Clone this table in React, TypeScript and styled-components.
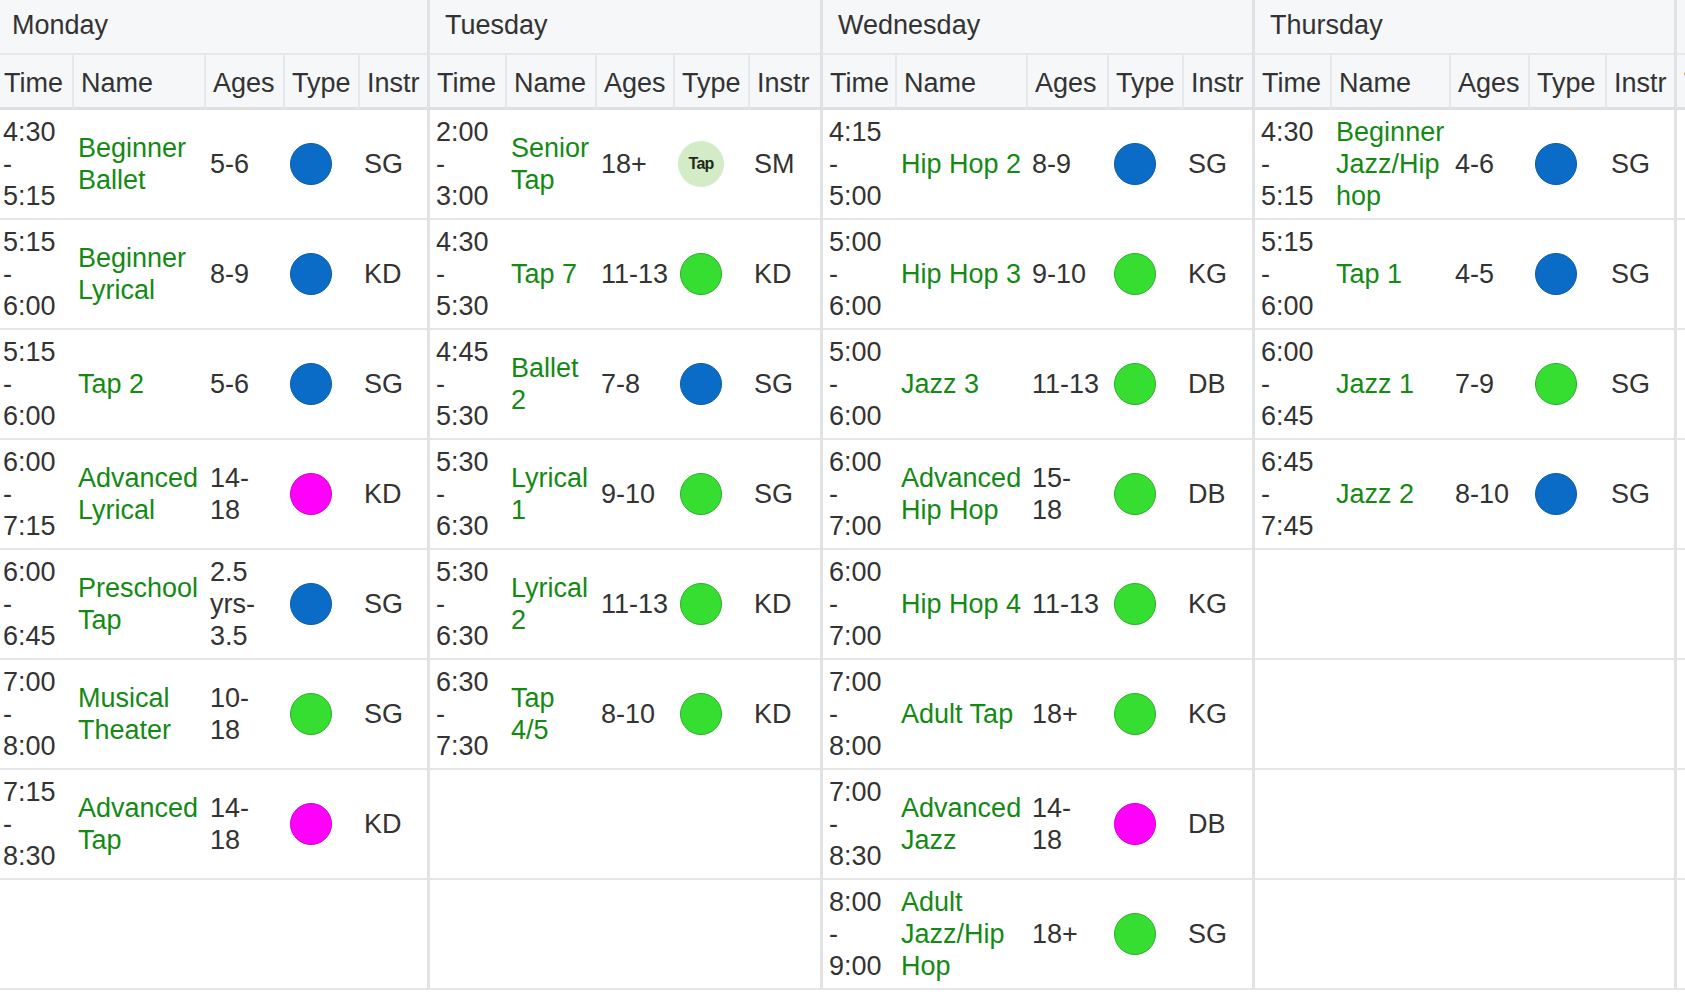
import React from 'react'
import styled, { createGlobalStyle } from 'styled-components'

const GlobalStyle = createGlobalStyle`
    html, body {
        margin: 0;
        padding: 0;
        background: #ffffff;
        overflow: hidden;
    }
    body {
        font-family: "Liberation Sans", Arial, Helvetica, sans-serif;
        color: #333333;
    }
`

type Kind = 'blue' | 'green' | 'pink' | 'tap'

interface ClassItem {
    time: string
    name: string
    ages: string
    kind: Kind
    instr: string
}

interface Day {
    title: string
    widths: number[]
    classes: ClassItem[]
}

const days: Day[] = [
    {
        title: 'Monday',
        widths: [75, 132, 79, 75, 69],
        classes: [
            { time: '4:30\n-\n5:15', name: 'Beginner Ballet', ages: '5-6', kind: 'blue', instr: 'SG' },
            { time: '5:15\n-\n6:00', name: 'Beginner Lyrical', ages: '8-9', kind: 'blue', instr: 'KD' },
            { time: '5:15\n-\n6:00', name: 'Tap 2', ages: '5-6', kind: 'blue', instr: 'SG' },
            { time: '6:00\n-\n7:15', name: 'Advanced Lyrical', ages: '14-\n18', kind: 'pink', instr: 'KD' },
            { time: '6:00\n-\n6:45', name: 'Preschool Tap', ages: '2.5\nyrs-\n3.5', kind: 'blue', instr: 'SG' },
            { time: '7:00\n-\n8:00', name: 'Musical Theater', ages: '10-\n18', kind: 'green', instr: 'SG' },
            { time: '7:15\n-\n8:30', name: 'Advanced Tap', ages: '14-\n18', kind: 'pink', instr: 'KD' },
        ],
    },
    {
        title: 'Tuesday',
        widths: [78, 90, 78, 75, 72],
        classes: [
            { time: '2:00\n-\n3:00', name: 'Senior Tap', ages: '18+', kind: 'tap', instr: 'SM' },
            { time: '4:30\n-\n5:30', name: 'Tap 7', ages: '11-13', kind: 'green', instr: 'KD' },
            { time: '4:45\n-\n5:30', name: 'Ballet 2', ages: '7-8', kind: 'blue', instr: 'SG' },
            { time: '5:30\n-\n6:30', name: 'Lyrical 1', ages: '9-10', kind: 'green', instr: 'SG' },
            { time: '5:30\n-\n6:30', name: 'Lyrical 2', ages: '11-13', kind: 'green', instr: 'KD' },
            { time: '6:30\n-\n7:30', name: 'Tap 4/5', ages: '8-10', kind: 'green', instr: 'KD' },
        ],
    },
    {
        title: 'Wednesday',
        widths: [75, 131, 81, 75, 70],
        classes: [
            { time: '4:15\n-\n5:00', name: 'Hip Hop 2', ages: '8-9', kind: 'blue', instr: 'SG' },
            { time: '5:00\n-\n6:00', name: 'Hip Hop 3', ages: '9-10', kind: 'green', instr: 'KG' },
            { time: '5:00\n-\n6:00', name: 'Jazz 3', ages: '11-13', kind: 'green', instr: 'DB' },
            { time: '6:00\n-\n7:00', name: 'Advanced Hip Hop', ages: '15-\n18', kind: 'green', instr: 'DB' },
            { time: '6:00\n-\n7:00', name: 'Hip Hop 4', ages: '11-13', kind: 'green', instr: 'KG' },
            { time: '7:00\n-\n8:00', name: 'Adult Tap', ages: '18+', kind: 'green', instr: 'KG' },
            { time: '7:00\n-\n8:30', name: 'Advanced Jazz', ages: '14-\n18', kind: 'pink', instr: 'DB' },
            { time: '8:00\n-\n9:00', name: 'Adult Jazz/Hip Hop', ages: '18+', kind: 'green', instr: 'SG' },
        ],
    },
    {
        title: 'Thursday',
        widths: [78, 119, 79, 77, 69],
        classes: [
            { time: '4:30\n-\n5:15', name: 'Beginner Jazz/Hip hop', ages: '4-6', kind: 'blue', instr: 'SG' },
            { time: '5:15\n-\n6:00', name: 'Tap 1', ages: '4-5', kind: 'blue', instr: 'SG' },
            { time: '6:00\n-\n6:45', name: 'Jazz 1', ages: '7-9', kind: 'green', instr: 'SG' },
            { time: '6:45\n-\n7:45', name: 'Jazz 2', ages: '8-10', kind: 'blue', instr: 'SG' },
        ],
    },
    {
        title: 'Friday',
        widths: [78, 120, 79, 75, 70],
        classes: [],
    },
]

const columns = ['Time', 'Name', 'Ages', 'Type', 'Instr']

const tableWidth = days.reduce((sum, d) => sum + d.widths.reduce((a, b) => a + b, 0), 0)

const Wrapper = styled.div`
    width: 1685px;
    height: 1000px;
    overflow: hidden;
`

const Table = styled.table<{ $w: number }>`
    width: ${p => p.$w}px;
    margin-left: -3px;
    table-layout: fixed;
    border-collapse: separate;
    border-spacing: 0;
    font-size: 27px;
    line-height: 32px;
`

const Col = styled.col<{ $w: number }>`
    width: ${p => p.$w}px;
`

const DayHeader = styled.th<{ $first: boolean }>`
    height: 49px;
    padding: 0 0 4px 15px;
    background: #f6f7f9;
    border-bottom: 2px solid #e6e7ea;
    border-left: ${p => (p.$first ? 'none' : '3px solid #e1e2e4')};
    text-align: left;
    font-weight: normal;
    white-space: nowrap;
    overflow: hidden;
`

const ColHeader = styled.th<{ $dayStart: boolean; $first: boolean }>`
    height: 48px;
    padding: 4px 2px 0 7px;
    background: #f6f7f9;
    border-bottom: 3px solid #dfe0e2;
    border-left: ${p => (p.$first ? 'none' : p.$dayStart ? '3px solid #e1e2e4' : '2px solid #e6e7ea')};
    text-align: left;
    font-weight: normal;
    white-space: nowrap;
    overflow: hidden;
`

const Cell = styled.td<{ $dayStart: boolean; $first: boolean }>`
    height: 96px;
    padding: 6px 3px 6px 6px;
    border-bottom: 2px solid #e6e6e6;
    border-left: ${p => (p.$dayStart && !p.$first ? '3px solid #e1e2e4' : 'none')};
    vertical-align: middle;
    text-align: left;
    overflow: hidden;
`

const Lines = styled.span`
    white-space: pre;
`

const ClassLink = styled.a`
    color: #148a14;
    text-decoration: none;
`

const dotColors: Record<Kind, { bg: string; edge: string }> = {
    blue: { bg: '#0a6cc6', edge: '#0b5aa6' },
    green: { bg: '#35de30', edge: '#2bb028' },
    pink: { bg: '#ff00fa', edge: '#d400d0' },
    tap: { bg: '#d3ebc6', edge: '#d3ebc6' },
}

const Dot = styled.span<{ $kind: Kind }>`
    display: inline-flex;
    align-items: center;
    justify-content: center;
    box-sizing: border-box;
    width: ${p => (p.$kind === 'tap' ? 46 : 42)}px;
    height: ${p => (p.$kind === 'tap' ? 46 : 42)}px;
    margin-left: ${p => (p.$kind === 'tap' ? -1 : 1)}px;
    border-radius: 50%;
    background: ${p => dotColors[p.$kind].bg};
    border: 1px solid ${p => dotColors[p.$kind].edge};
    vertical-align: middle;
    font-size: 16px;
    font-weight: bold;
    letter-spacing: -0.8px;
    line-height: 1;
    color: #1f2a1c;
`

const TypeDot: React.FC<{ kind: Kind }> = ({ kind }) => (
    <Dot $kind={kind}>{kind === 'tap' ? 'Tap' : null}</Dot>
)

const rowCount = Math.max(...days.map(d => d.classes.length))

export default function App() {
    return (
        <Wrapper>
            <GlobalStyle />
            <Table $w={tableWidth}>
                <colgroup>
                    {days.map(day =>
                        day.widths.map((w, i) => <Col key={day.title + i} $w={w} />)
                    )}
                </colgroup>
                <thead>
                    <tr>
                        {days.map((day, d) => (
                            <DayHeader key={day.title} colSpan={5} $first={d === 0}>
                                {day.title}
                            </DayHeader>
                        ))}
                    </tr>
                    <tr>
                        {days.map((day, d) =>
                            columns.map((c, i) => (
                                <ColHeader key={day.title + c} $dayStart={i === 0} $first={d === 0 && i === 0}>
                                    {c}
                                </ColHeader>
                            ))
                        )}
                    </tr>
                </thead>
                <tbody>
                    {Array.from({ length: rowCount }).map((_, r) => (
                        <tr key={r}>
                            {days.map((day, d) => {
                                const item = day.classes[r]
                                const first = d === 0
                                if (!item) {
                                    return columns.map((c, i) => (
                                        <Cell key={day.title + c} $dayStart={i === 0} $first={first} />
                                    ))
                                }
                                return (
                                    <React.Fragment key={day.title}>
                                        <Cell $dayStart $first={first}>
                                            <Lines>{item.time}</Lines>
                                        </Cell>
                                        <Cell $dayStart={false} $first={first}>
                                            <ClassLink href="#">{item.name}</ClassLink>
                                        </Cell>
                                        <Cell $dayStart={false} $first={first}>
                                            <Lines>{item.ages}</Lines>
                                        </Cell>
                                        <Cell $dayStart={false} $first={first}>
                                            <TypeDot kind={item.kind} />
                                        </Cell>
                                        <Cell $dayStart={false} $first={first}>
                                            {item.instr}
                                        </Cell>
                                    </React.Fragment>
                                )
                            })}
                        </tr>
                    ))}
                </tbody>
            </Table>
        </Wrapper>
    )
}
